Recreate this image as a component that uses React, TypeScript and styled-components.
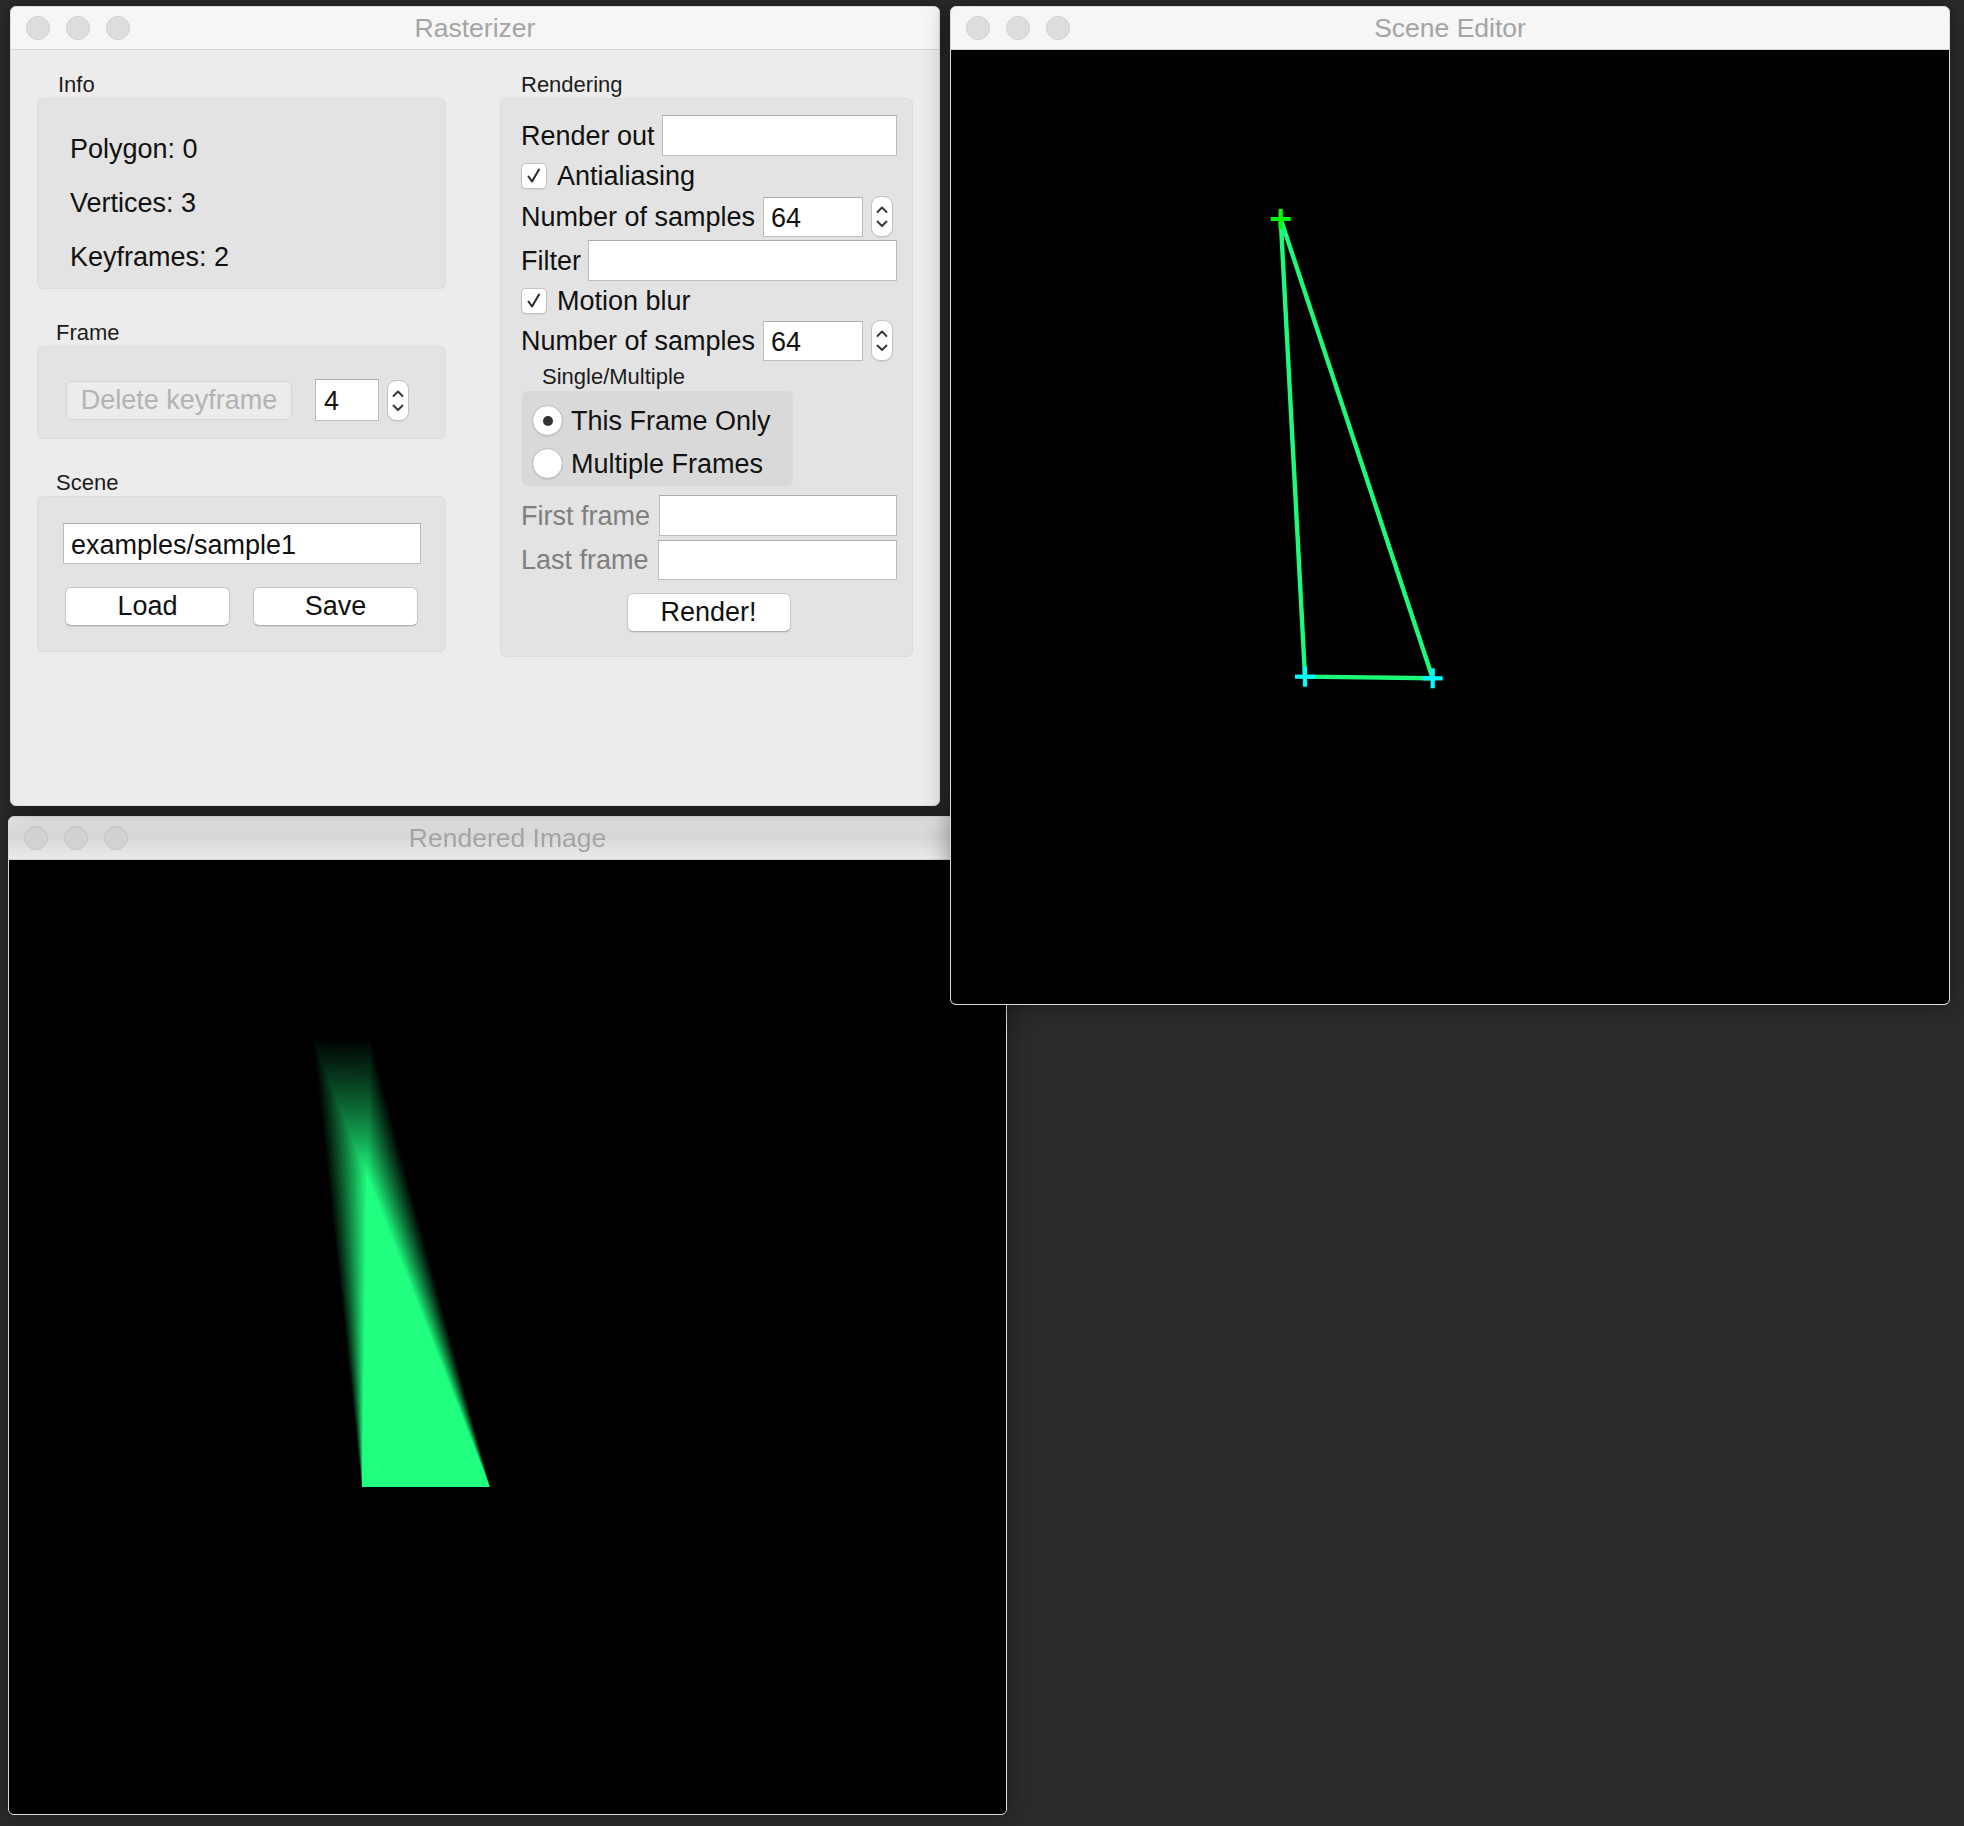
import React from 'react';
import styled, { createGlobalStyle } from 'styled-components';

const Global = createGlobalStyle`
  html, body { margin: 0; padding: 0; background: #2b2b2b; }
  body { font-family: "Liberation Sans", Arial, sans-serif; }
`;

const Desktop = styled.div`
  position: relative;
  width: 1964px;
  height: 1826px;
  overflow: hidden;
  background: #2b2b2b;
`;

const Window = styled.div<{ $x: number; $y: number; $w: number; $h: number; $z: number }>`
  position: absolute;
  left: ${p => p.$x}px;
  top: ${p => p.$y}px;
  width: ${p => p.$w}px;
  height: ${p => p.$h}px;
  z-index: ${p => p.$z};
  box-sizing: border-box;
  display: flex;
  flex-direction: column;
  border: 1px solid #dadada;
  border-radius: 6px;
  overflow: hidden;
  background: #ececec;
  box-shadow: 0 0 26px rgba(0, 0, 0, 0.4);
`;

const TitleBar = styled.div<{ $inactive?: boolean }>`
  flex: none;
  height: 42px;
  display: grid;
  grid-template-columns: 1fr auto 1fr;
  align-items: center;
  padding: 0 15px;
  background: ${p => (p.$inactive ? 'linear-gradient(#e6e6e6, #d6d6d6 45%, #ebebeb)' : '#f6f6f6')};
  border-bottom: 1px solid #d3d3d3;
`;

const Lights = styled.div`
  display: flex;
  gap: 16px;
`;

const Light = styled.span<{ $inactive?: boolean }>`
  width: 24px;
  height: 24px;
  box-sizing: border-box;
  border-radius: 50%;
  background: ${p => (p.$inactive ? '#d2d2d2' : '#dddddd')};
  border: 1px solid ${p => (p.$inactive ? '#c4c4c4' : '#d0d0d0')};
`;

const Title = styled.div`
  font-size: 26.5px;
  color: #a4a4a4;
  white-space: nowrap;
`;

const Content = styled.div`
  flex: 1;
  display: flex;
  gap: 54px;
  padding: 22px 26px 0 26px;
  background: #ececec;
`;

const Column = styled.div<{ $w: number }>`
  width: ${p => p.$w}px;
  flex: none;
  display: flex;
  flex-direction: column;
`;

const Section = styled.section<{ $mt?: number }>`
  margin-top: ${p => p.$mt ?? 0}px;
  display: flex;
  flex-direction: column;
`;

const SectionLabel = styled.div<{ $indent?: number; $mt?: number }>`
  height: 26px;
  line-height: 26px;
  margin-top: ${p => p.$mt ?? 0}px;
  font-size: 22px;
  color: #1c1c1c;
  padding-left: ${p => p.$indent ?? 21}px;
  white-space: nowrap;
`;

const Group = styled.div<{ $h: number; $pt: number; $pl: number; $pr?: number }>`
  height: ${p => p.$h}px;
  box-sizing: border-box;
  padding: ${p => p.$pt}px ${p => p.$pr ?? 0}px 0 ${p => p.$pl}px;
  background: #e3e3e3;
  border: 1px solid #dcdcdc;
  border-radius: 6px;
  display: flex;
  flex-direction: column;
`;

const InfoLine = styled.div`
  font-size: 27px;
  line-height: 54px;
  color: #111;
`;

const Row = styled.div<{ $mt?: number; $gap?: number }>`
  display: flex;
  align-items: center;
  gap: ${p => p.$gap ?? 7}px;
  margin-top: ${p => p.$mt ?? 0}px;
`;

const Label = styled.span<{ $disabled?: boolean }>`
  font-size: 27px;
  line-height: 26px;
  color: ${p => (p.$disabled ? '#7f7f7f' : '#111')};
  white-space: nowrap;
`;

const TextField = styled.input<{ $w?: number; $h?: number; $pl?: number; $ml?: number }>`
  box-sizing: border-box;
  height: ${p => p.$h ?? 41}px;
  ${p => (p.$w ? `width: ${p.$w}px; flex: none;` : 'flex: 1; min-width: 0;')}
  margin: 0 0 0 ${p => p.$ml ?? 0}px;
  padding: 3px 0 0 ${p => p.$pl ?? 7}px;
  background: #fff;
  border: 1px solid #bdbdbd;
  border-top-color: #acacac;
  border-radius: 0;
  outline: none;
  font-family: "Liberation Sans", Arial, sans-serif;
  font-size: 27px;
  color: #111;
`;

const StepperBox = styled.span`
  flex: none;
  width: 22px;
  height: 41px;
  box-sizing: border-box;
  border: 1px solid #c2c2c2;
  border-radius: 9px;
  background: #fff;
  box-shadow: 0 1px 1px rgba(0, 0, 0, 0.07);
  display: block;
`;

const IconSvg = styled.svg`
  display: block;
`;

const Stepper = () => (
  <StepperBox>
    <IconSvg width="20" height="39" viewBox="0 0 20 39">
      <path d="M5.5 15 L10 10.5 L14.5 15" fill="none" stroke="#333" strokeWidth="1.8" strokeLinecap="round" strokeLinejoin="round" />
      <path d="M5.5 24.5 L10 29 L14.5 24.5" fill="none" stroke="#333" strokeWidth="1.8" strokeLinecap="round" strokeLinejoin="round" />
    </IconSvg>
  </StepperBox>
);

const CheckBoxBox = styled.span`
  flex: none;
  width: 26px;
  height: 26px;
  box-sizing: border-box;
  border: 1px solid #c0c0c0;
  border-radius: 5px;
  background: #fff;
  box-shadow: 0 1px 1px rgba(0, 0, 0, 0.06);
  display: block;
`;

const CheckBox = () => (
  <CheckBoxBox>
    <IconSvg width="24" height="24" viewBox="0 0 24 24">
      <path d="M6.5 12.5 L10 17.5 L17 5.5" fill="none" stroke="#2e2e2e" strokeWidth="2.1" strokeLinecap="round" strokeLinejoin="round" />
    </IconSvg>
  </CheckBoxBox>
);

const RadioBox = styled.div`
  margin: 1px 0 0 1px;
  width: 271px;
  height: 95px;
  box-sizing: border-box;
  padding: 14px 0 0 10px;
  background: #d9d9d9;
  border-radius: 6px;
  display: flex;
  flex-direction: column;
  gap: 12px;
`;

const RadioCircle = styled.span<{ $on?: boolean }>`
  flex: none;
  width: 31px;
  height: 31px;
  box-sizing: border-box;
  border-radius: 50%;
  border: 1px solid #b8b8b8;
  background: #fff;
  box-shadow: 0 1px 1px rgba(0, 0, 0, 0.08);
  display: flex;
  align-items: center;
  justify-content: center;
  &::after {
    content: '';
    display: ${p => (p.$on ? 'block' : 'none')};
    width: 10px;
    height: 10px;
    border-radius: 50%;
    background: #333;
  }
`;

const PushButton = styled.button<{ $w: number }>`
  flex: none;
  width: ${p => p.$w}px;
  height: 39px;
  box-sizing: border-box;
  margin: 0;
  padding: 0;
  background: #fff;
  border: 1px solid #c6c6c6;
  border-bottom-color: #aeaeae;
  border-radius: 6px;
  box-shadow: 0 1px 1px rgba(0, 0, 0, 0.07);
  font-family: "Liberation Sans", Arial, sans-serif;
  font-size: 27px;
  color: #111;
  &:disabled {
    background: #ececec;
    color: #b3b3b3;
    border-color: #d6d6d6;
    box-shadow: none;
  }
`;

const ButtonRow = styled.div<{ $mt: number; $ml?: number }>`
  display: flex;
  gap: 23px;
  margin-top: ${p => p.$mt}px;
  margin-left: ${p => p.$ml ?? 0}px;
`;

const CenterRow = styled.div<{ $mt: number }>`
  display: flex;
  justify-content: center;
  margin-top: ${p => p.$mt}px;
  padding-right: 1px;
`;

const Canvas = styled.div`
  flex: 1;
  background: #000;
  overflow: hidden;
`;

const CanvasSvg = styled.svg`
  display: block;
`;

const BlurTri = styled.polygon`
  mix-blend-mode: plus-lighter;
`;

const SAMPLES = 32;
const blurTris = Array.from({ length: SAMPLES }, (_, i) => {
  const a = 303 + ((361 - 303) * (i + 0.5)) / SAMPLES;
  return `${a.toFixed(2)},177 353,627 481,627`;
});

const Cross = ({ x, y, color }: { x: number; y: number; color: string }) => (
  <g stroke={color} strokeWidth="4.2">
    <line x1={x - 10} y1={y} x2={x + 10} y2={y} />
    <line x1={x} y1={y - 10} x2={x} y2={y + 10} />
  </g>
);

export default function App() {
  return (
    <>
      <Global />
      <Desktop>
        <Window $x={10} $y={6} $w={930} $h={800} $z={2}>
          <TitleBar>
            <Lights>
              <Light />
              <Light />
              <Light />
            </Lights>
            <Title>Rasterizer</Title>
            <span />
          </TitleBar>
          <Content>
            <Column $w={409}>
              <Section>
                <SectionLabel>Info</SectionLabel>
                <Group $h={191} $pt={23} $pl={32}>
                  <InfoLine>Polygon: 0</InfoLine>
                  <InfoLine>Vertices: 3</InfoLine>
                  <InfoLine>Keyframes: 2</InfoLine>
                </Group>
              </Section>
              <Section $mt={31}>
                <SectionLabel $indent={19}>Frame</SectionLabel>
                <Group $h={93} $pt={32} $pl={28}>
                  <Row $gap={0}>
                    <PushButton $w={226} disabled>
                      Delete keyframe
                    </PushButton>
                    <Row $gap={8}>
                      <TextField $w={64} $h={42} $pl={8} $ml={23} readOnly defaultValue="4" />
                      <Stepper />
                    </Row>
                  </Row>
                </Group>
              </Section>
              <Section $mt={31}>
                <SectionLabel $indent={19}>Scene</SectionLabel>
                <Group $h={156} $pt={26} $pl={25}>
                  <TextField $w={358} readOnly defaultValue="examples/sample1" />
                  <ButtonRow $mt={23} $ml={2}>
                    <PushButton $w={165}>Load</PushButton>
                    <PushButton $w={165}>Save</PushButton>
                  </ButtonRow>
                </Group>
              </Section>
            </Column>
            <Column $w={413}>
              <Section>
                <SectionLabel>Rendering</SectionLabel>
                <Group $h={559} $pt={16} $pl={20} $pr={15}>
                  <Row>
                    <Label>Render out</Label>
                    <TextField readOnly defaultValue="" />
                  </Row>
                  <Row $mt={7} $gap={10}>
                    <CheckBox />
                    <Label>Antialiasing</Label>
                  </Row>
                  <Row $mt={7} $gap={8}>
                    <Label>Number of samples</Label>
                    <TextField $w={100} $h={40} readOnly defaultValue="64" />
                    <Stepper />
                  </Row>
                  <Row $mt={3}>
                    <Label>Filter</Label>
                    <TextField readOnly defaultValue="" />
                  </Row>
                  <Row $mt={7} $gap={10}>
                    <CheckBox />
                    <Label>Motion blur</Label>
                  </Row>
                  <Row $mt={6} $gap={8}>
                    <Label>Number of samples</Label>
                    <TextField $w={100} $h={40} readOnly defaultValue="64" />
                    <Stepper />
                  </Row>
                  <SectionLabel $indent={21} $mt={3}>
                    Single/Multiple
                  </SectionLabel>
                  <RadioBox>
                    <Row $gap={8}>
                      <RadioCircle $on />
                      <Label>This Frame Only</Label>
                    </Row>
                    <Row $gap={8}>
                      <RadioCircle />
                      <Label>Multiple Frames</Label>
                    </Row>
                  </RadioBox>
                  <Row $mt={9} $gap={9}>
                    <Label $disabled>First frame</Label>
                    <TextField readOnly defaultValue="" />
                  </Row>
                  <Row $mt={4} $gap={9}>
                    <Label $disabled>Last frame</Label>
                    <TextField $h={40} readOnly defaultValue="" />
                  </Row>
                  <CenterRow $mt={13}>
                    <PushButton $w={164}>Render!</PushButton>
                  </CenterRow>
                </Group>
              </Section>
            </Column>
          </Content>
        </Window>

        <Window $x={8} $y={816} $w={999} $h={999} $z={1}>
          <TitleBar $inactive>
            <Lights>
              <Light $inactive />
              <Light $inactive />
              <Light $inactive />
            </Lights>
            <Title>Rendered Image</Title>
            <span />
          </TitleBar>
          <Canvas>
            <CanvasSvg width="997" height="955">
              <rect x="0" y="0" width="997" height="955" fill="#000" />
              <g>
                {blurTris.map((pts, i) => (
                  <BlurTri key={i} points={pts} fill="rgb(30,252,128)" fillOpacity={1 / SAMPLES} />
                ))}
              </g>
            </CanvasSvg>
          </Canvas>
        </Window>

        <Window $x={950} $y={6} $w={1000} $h={999} $z={3}>
          <TitleBar>
            <Lights>
              <Light />
              <Light />
              <Light />
            </Lights>
            <Title>Scene Editor</Title>
            <span />
          </TitleBar>
          <Canvas>
            <CanvasSvg width="998" height="955">
              <polygon
                points="329.7,169 354,626.7 481.7,628.3"
                fill="none"
                stroke="rgb(28,250,122)"
                strokeWidth="4.4"
                strokeLinejoin="miter"
              />
              <Cross x={329.7} y={169} color="#00ff00" />
              <Cross x={354} y={626.7} color="#00ffff" />
              <Cross x={481.7} y={628.3} color="#00ffff" />
            </CanvasSvg>
          </Canvas>
        </Window>
      </Desktop>
    </>
  );
}
